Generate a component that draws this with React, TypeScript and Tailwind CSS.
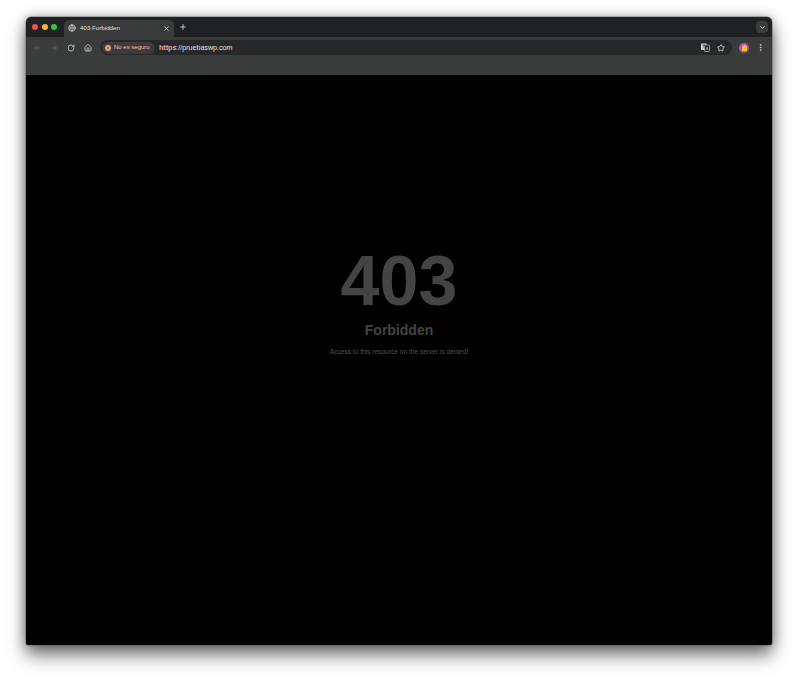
import React from "react";
import { ArrowLeft, ArrowRight, RotateCw, House, X, Plus, ChevronDown, Star, EllipsisVertical, Globe } from "lucide-react";

const font = "font-['Liberation_Sans',Arial,sans-serif]";

const TrafficLights = () => (
  <div className="flex items-center gap-[3.5px] pl-[6px]">
    <span className="h-[6px] w-[6px] rounded-full bg-[#f0504a]" />
    <span className="h-[6px] w-[6px] rounded-full bg-[#f5b82e]" />
    <span className="h-[6px] w-[6px] rounded-full bg-[#2fc84a]" />
  </div>
);

// two overlapping pages, chrome's translate button
const TranslateIcon = () => (
  <svg width="9" height="9" viewBox="0 0 9 9" className="ml-auto">
    <rect x="0" y="0.5" width="5.5" height="6.5" rx="0.6" fill="#d8dad9" />
    <rect x="3.5" y="2" width="5" height="6.5" rx="0.6" fill="#272829" stroke="#a9abaa" strokeWidth="0.8" />
    <path d="M1.2 2.2h3M2.7 1.6v0.8M1.6 5.2c1-.6 1.5-1.5 1.7-2.8" stroke="#272829" strokeWidth="0.6" fill="none" />
    <path d="M5 7l1-3 1 3" stroke="#c4c7c5" strokeWidth="0.6" fill="none" />
  </svg>
);

const TabStrip = () => (
  <div className="flex h-[20px] shrink-0 items-end bg-[#1f2122]">
    <div className="flex h-[20px] w-[38px] items-center">
      <TrafficLights />
    </div>
    <div className="flex h-[17px] w-[110px] items-center rounded-t-[5px] bg-[#3a3b3b] pl-[4px] pr-[4px]">
      <Globe size={8} strokeWidth={2.5} className="-mt-px text-[#c4c7c5]" />
      <span className="-mt-px ml-[4px] text-[6.2px] leading-[8px] text-[#e3e3e3]">403 Forbidden</span>
      <X size={7} strokeWidth={2.5} className="-mt-px ml-auto text-[#e3e3e3]" />
    </div>
    <div className="flex h-[20px] w-[18px] items-center justify-center">
      <Plus size={8} strokeWidth={2.5} className="text-[#e3e3e3]" />
    </div>
    <div className="ml-auto flex h-[20px] items-center pr-[4px]">
      <span className="flex h-[12px] w-[12px] items-center justify-center rounded-[4px] bg-[#3a3b3b]">
        <ChevronDown size={7} strokeWidth={3} className="text-[#e3e3e3]" />
      </span>
    </div>
  </div>
);

const Toolbar = () => (
  <div className="flex h-[21px] shrink-0 items-center bg-[#3a3b3b] text-[#c4c7c5]">
    <div className="flex w-[74px] items-center pl-[7px]">
      <ArrowLeft size={8} strokeWidth={2} className="text-[#6f7170]" />
      <ArrowRight size={8} strokeWidth={2} className="ml-[9px] text-[#6f7170]" />
      <RotateCw size={8} strokeWidth={2.5} className="ml-[9px]" />
      <House size={8} strokeWidth={2.5} className="ml-[9px]" />
    </div>
    <div className="flex h-[15px] w-[632px] items-center rounded-full bg-[#272829] pl-[2px] pr-[7px]">
      <div className="flex h-[12px] w-[53px] items-center rounded-full bg-[#3f3a3a] pl-[3px]">
        <span className="flex h-[6px] w-[6px] items-center justify-center rounded-full bg-[#f2a59d]">
          <X size={4} strokeWidth={4} className="text-[#3f3a3a]" />
        </span>
        <span className="-mt-px ml-[3px] text-[6px] leading-[8px] text-[#f2b8b5]">No es seguro</span>
      </div>
      <span className="mt-px ml-[4px] text-[7.1px] leading-[9px] text-[#e3e3e3]">
        <span className="font-bold text-[#f2a59d]">https</span>
        <span className="text-[#f2a59d]">:</span>//pruebaswp.com
      </span>
      <TranslateIcon />
      <Star size={8} strokeWidth={2.5} className="ml-[7px] text-[#d8dad9]" />
    </div>
    <div className="ml-[7px] flex h-[10px] w-[10px] items-center justify-center rounded-full bg-[#b04fc0]">
      <span className="h-[6px] w-[5px] rounded-t-full bg-[#f2c230]" />
    </div>
    <EllipsisVertical size={9} strokeWidth={2.5} className="ml-[7px] text-[#d0d2d1]" />
  </div>
);

const ErrorPage = () => (
  <div className="flex flex-1 flex-col items-center bg-[#010101] pt-[167px] text-[#444444]">
    <h1 className="text-[70px] leading-[78px] font-bold">403</h1>
    <h2 className="mt-[2px] text-[14px] leading-[16px] font-bold">Forbidden</h2>
    <p className="mt-[9px] text-[6.6px] leading-[9px] text-[#505050]">Access to this resource on the server is denied!</p>
  </div>
);

export default function App() {
  return (
    <div className={`h-[680px] w-[798px] overflow-hidden bg-white px-[26px] pt-[17px] ${font}`}>
      <div className="flex h-[628px] w-[746px] flex-col overflow-hidden rounded-t-[5px] rounded-b-[2px] shadow-[0_0_0_0.5px_rgba(90,90,90,0.8),0_10px_18px_rgba(0,0,0,0.55),0_0_12px_rgba(0,0,0,0.3)]">
        <TabStrip />
        <Toolbar />
        <div className="h-[17px] shrink-0 bg-[#3a3b3b]" />
        <ErrorPage />
      </div>
    </div>
  );
}
